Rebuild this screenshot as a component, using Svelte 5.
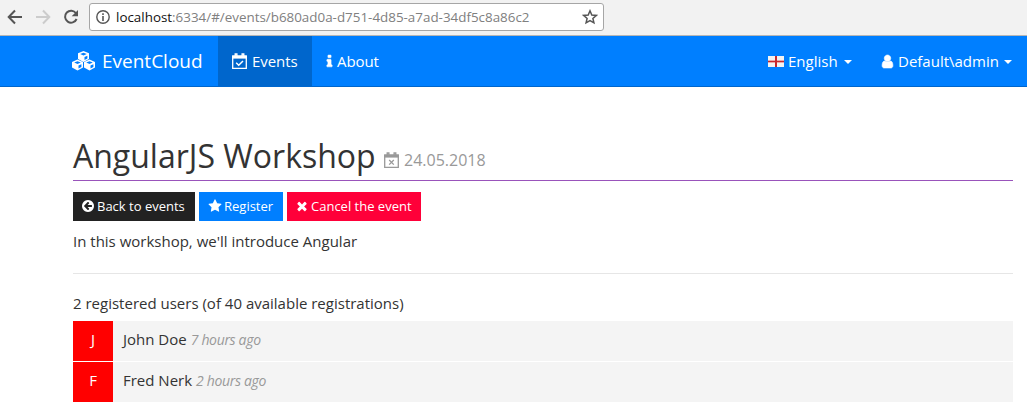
<script>
  const icons = {
    user: 'M1536 1399q0 109-62.5 187t-150.5 78h-854q-88 0-150.5-78t-62.5-187q0-85 8.5-160.5t31.5-152 58.5-131 94-89 134.5-34.5q131 128 313 128t313-128q76 0 134.5 34.5t94 89 58.5 131 31.5 152 8.5 160.5zm-256-887q0 159-112.5 271.5t-271.5 112.5-271.5-112.5-112.5-271.5 112.5-271.5 271.5-112.5 271.5 112.5 112.5 271.5z',
    star: 'M1728 647q0 22-26 48l-363 354 86 500q1 7 1 20 0 21-10.5 35.5t-30.5 14.5q-19 0-40-12l-449-236-449 236q-22 12-40 12-21 0-31.5-14.5t-10.5-35.5q0-6 2-20l86-500-364-354q-25-27-25-48 0-37 56-46l502-73 225-455q19-41 49-41t49 41l225 455 502 73q56 9 56 46z',
    times: 'M1490 1322q0 40-28 68l-136 136q-28 28-68 28t-68-28l-294-294-294 294q-28 28-68 28t-68-28l-136-136q-28-28-28-68t28-68l294-294-294-294q-28-28-28-68t28-68l136-136q28-28 68-28t68 28l294 294 294-294q28-28 68-28t68 28l136 136q28 28 28 68t-28 68l-294 294 294 294q28 28 28 68z',
    back: 'M1408 960v-128q0-26-19-45t-45-19h-502l189-189q19-19 19-45t-19-45l-91-91q-18-18-45-18t-45 18l-362 362-91 91q-18 18-18 45t18 45l91 91 362 362q18 18 45 18t45-18l91-91q18-18 18-45t-18-45l-189-189h502q26 0 45-19t19-45zm256-64q0 209-103 385.5t-279.5 279.5-385.5 103-385.5-103-279.5-279.5-103-385.5 103-385.5 279.5-279.5 385.5-103 385.5 103 279.5 279.5 103 385.5z',
    info: 'M1216 1344v128q0 26-19 45t-45 19h-512q-26 0-45-19t-19-45v-128q0-26 19-45t45-19h64v-384h-64q-26 0-45-19t-19-45v-128q0-26 19-45t45-19h384q26 0 45 19t19 45v576h64q26 0 45 19t19 45zm-128-1152v192q0 26-19 45t-45 19h-256q-26 0-45-19t-19-45v-192q0-26 19-45t45-19h256q26 0 45 19t19 45z'
  };
  const users = [
    { name: 'John Doe', time: '7 hours ago' },
    { name: 'Fred Nerk', time: '2 hours ago' }
  ];
</script>

{#snippet calendar(mark, weight)}
  <svg class="cal" viewBox="0 0 15 16" width="15" height="16" fill="none" stroke="currentColor">
    <path d="M.7 3.2h13.6v12.1H.7z" stroke-width="1.3" />
    <path d="M.2 2.500h14.600v3.100H.2z" fill="currentColor" stroke="none" />
    <path d="M3.200 1h1.700v3H3.200zM10.100 1h1.700v3h-1.700z" stroke-width="1.300" />
    <path d={mark} stroke-width={weight} />
  </svg>
{/snippet}

<div class="browser">
  <svg class="controls" width="89" height="35" viewBox="0 0 89 35" fill="none" stroke-width="2">
    <path d="M22 17H9M15 10.5 8.7 17l6.3 6.5" stroke="#555" />
    <path d="M36 17h13M43 10.5l6.3 6.5-6.3 6.5" stroke="#ccc" />
    <path d="M76 13.2A6 6 0 1 0 76.6 19" stroke="#555" />
    <path d="M78 10v6.3h-6.3z" fill="#555" />
  </svg>
  <div class="address">
    <svg width="14" height="14" viewBox="0 0 14 14"><circle cx="7" cy="7" r="6.2" fill="none" stroke="#555" stroke-width="1.4" /><path d="M6.2 3.2h1.6v1.7H6.2zM6.2 6h1.6v5H6.2z" fill="#555" /></svg>
    <span class="url"><b>localhost</b>:6334/#/events/b680ad0a-d751-4d85-a7ad-34df5c8a86c2</span>
    <svg class="bookmark" width="16" height="16" viewBox="0 0 16 16"><path d="M8 1.8 9.8 6l4.5.4-3.4 3 1 4.4L8 11.5l-3.9 2.3 1-4.4-3.4-3L6.200 6z" fill="none" stroke="#555" stroke-width="1.5" /></svg>
  </div>
</div>

<nav>
  <a class="brand" href="#/">
    <svg width="25" height="20" viewBox="0 0 25 20">
      <g id="cube">
        <path d="M12.500 0 18 2.300V8l-5.500 2.900L7 8V2.300z" fill="#fff" />
        <path d="m9.200 3 3.300-1.300L15.800 3l-3.300 1.400zM13.500 6l2.900-1.300v2.700l-2.900 1.500z" fill="#007fff" />
      </g>
      <use href="#cube" x="-6" y="8.600" /><use href="#cube" x="6" y="8.600" />
    </svg>
    <span>EventCloud</span>
  </a>
  <a class="item active" href="#/events">{@render calendar('M4.200 9.800 6.700 12.200 11 8', 1.5)}<span>Events</span></a>
  <a class="item about" href="#/about"><svg width="15" height="15" viewBox="0 0 1792 1792"><path d={icons.info} stroke="currentColor" stroke-width="60" /></svg><span>About</span></a>
  <a class="item language" href="#/language">
    <svg width="16" height="11" viewBox="0 0 16 11" shape-rendering="crispEdges"><path d="M0 0h16v11H0z" fill="#f4f3f2" /><path d="M7 0h2v11H7zM0 4h16v3H0z" fill="#e9aaa9" /><path d="M7 0h2v11H7zM0 5h16v1H0z" fill="#c9292d" /></svg>
    <span>English</span><i class="caret"></i>
  </a>
  <a class="item account" href="#/account"><svg width="15" height="15" viewBox="0 0 1792 1792"><path d={icons.user} stroke="currentColor" stroke-width="80" /></svg><span>Default\admin</span><i class="caret"></i></a>
</nav>

<main>
  <h1><span class="title">AngularJS Workshop</span><small>{@render calendar('m5.200 8 4.600 4.600M9.800 8l-4.600 4.600', 1.3)}<span>24.05.2018</span></small></h1>
  <div class="actions">
    <button class="dark"><svg width="14" height="14" viewBox="0 0 1792 1792"><path d={icons.back} /></svg><span>Back to events</span></button>
    <button class="primary"><svg width="14" height="14" viewBox="0 0 1792 1792"><path d={icons.star} /></svg><span>Register</span></button>
    <button class="danger"><svg width="14" height="14" viewBox="0 0 1792 1792"><path d={icons.times} /></svg><span>Cancel the event</span></button>
  </div>
  <p class="description"><span>In this workshop, we'll introduce Angular</span></p>
  <p class="count"><span>2 registered users (of 40 available registrations)</span></p>
  <ul>
    {#each users as user}
      <li><div class="avatar">{user.name[0]}</div><span class="name">{user.name}</span><em>{user.time}</em></li>
    {/each}
  </ul>
</main>

<style>
  :global(body) { background: #fff; overflow: hidden; font: 15px/21px "Open Sans", sans-serif; color: #333; }
  svg { display: block; flex: none; fill: currentColor; }
  svg.cal, svg.controls { fill: none; }
  span, em { white-space: nowrap; }
  .browser { height: 36px; box-sizing: border-box; background: #f2f2f2; border-bottom: 1px solid #b6b6b6; display: flex; align-items: flex-start; }
  .address { box-sizing: border-box; width: 515px; height: 28px; margin-top: 3px; border: 1px solid #a6a6a6; border-radius: 3px; background: #fff; display: flex; align-items: center; padding: 0 5px 0 6px; }
  .url { font: 13.4px/20px "Open Sans", sans-serif; color: #808080; margin-left: 6px; }
  .url b { font-weight: 400; color: #111; }
  .bookmark { margin-left: auto; }
  nav { height: 51px; box-sizing: border-box; background: #007fff; border-bottom: 1px solid #06c; display: flex; color: #fff; padding-left: 71px; }
  nav a { color: inherit; text-decoration: none; display: flex; align-items: center; box-sizing: border-box; height: 50px; }
  .brand { width: 147px; font-size: 19px; gap: 6px; }
  .item { gap: 4px; }
  .active { width: 94px; background: #06c; padding-left: 14px; gap: 5px; }
  .active span { letter-spacing: -0.05px; }
  .about { padding-left: 10px; gap: 0; }
  .about span { letter-spacing: -0.1px; }
  .language { margin-left: auto; width: 112px; }
  .account { width: 147px; gap: 3px; padding-left: 0; }
  .caret { border: 4px solid transparent; border-top-color: #fff; border-bottom: 0; margin-left: 2px; margin-top: 2px; }
  main { padding: 47px 14px 0 73px; }
  h1 { height: 47px; box-sizing: border-box; margin: 0; border-bottom: 1px solid #9954bb; display: flex; align-items: baseline; font-size: 32px; line-height: 43px; font-weight: 400; }
  .title { width: 303px; }
  small { display: flex; align-items: center; gap: 5px; color: #999; font-size: 16px; font-weight: 400; line-height: 22px; margin-left: 8px; }
  .actions { display: flex; gap: 4px; margin-top: 11px; }
  button { height: 29px; border: 0; padding: 0 0 1px 8px; display: flex; align-items: center; gap: 2px; font: 13px/18px "Open Sans", sans-serif; color: #fff; }
  .dark { background: #222; width: 122px; }
  .primary { background: #007fff; width: 84px; padding-left: 9px; }
  .danger { background: #ff0039; width: 134px; }
  p { margin: 0; }
  .description { height: 53px; box-sizing: border-box; padding-top: 10px; border-bottom: 1px solid #e6e6e6; }
  .count { height: 47px; box-sizing: border-box; padding-top: 19px; }
  ul { list-style: none; margin: 0; padding: 0; display: grid; gap: 1px; }
  li { height: 40px; background: #f4f4f4; display: flex; line-height: 37px; }
  .avatar { width: 40px; background: #f00; color: #fff; text-align: center; margin-right: 10px; }
  em { color: #999; font-size: 14px; letter-spacing: -0.33px; margin-left: 4px; }
</style>
